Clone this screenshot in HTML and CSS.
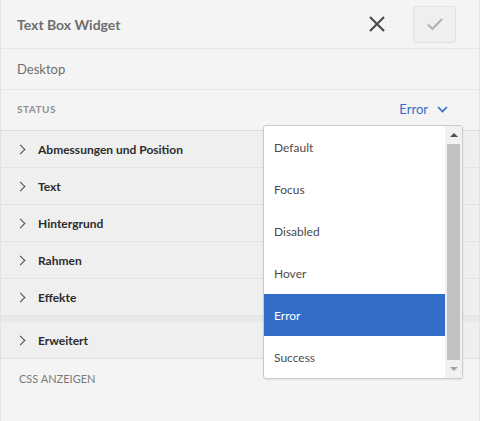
FILE: index.html
```html
<!DOCTYPE html>
<html>
<head>
<meta charset="utf-8">
<link rel="stylesheet" href="styles.css">
</head>
<body>
<div class="panel">
  <header class="header">
    <h1 class="title">Text Box Widget</h1>
    <button class="icon-btn close" aria-label="Close">
      <svg width="18" height="18" viewBox="0 0 18 18"><path d="M2 2L16 16M16 2L2 16" stroke="#4b4b4b" stroke-width="2.2" fill="none"/></svg>
    </button>
    <button class="icon-btn confirm" aria-label="Confirm">
      <svg width="18" height="14" viewBox="0 0 18 14"><path d="M2 7.5L6.5 12L16 2" stroke="#b3b3b3" stroke-width="2.2" fill="none"/></svg>
    </button>
  </header>
  <div class="row device">Desktop</div>
  <div class="row status">
    <span class="label">STATUS</span>
    <span class="select">Error
      <svg width="11" height="7" viewBox="0 0 11 7"><path d="M1 1L5.5 5.5L10 1" stroke="#326ec9" stroke-width="1.6" fill="none"/></svg>
    </span>
  </div>
  <div class="accordion">
    <div class="item"><span class="chev"></span>Abmessungen und Position</div>
    <div class="item"><span class="chev"></span>Text</div>
    <div class="item"><span class="chev"></span>Hintergrund</div>
    <div class="item"><span class="chev"></span>Rahmen</div>
    <div class="item"><span class="chev"></span>Effekte</div>
    <div class="band"></div>
    <div class="item"><span class="chev"></span>Erweitert</div>
  </div>
  <div class="css-link">CSS ANZEIGEN</div>

  <div class="dropdown">
    <ul class="options">
      <li>Default</li>
      <li>Focus</li>
      <li>Disabled</li>
      <li>Hover</li>
      <li class="selected">Error</li>
      <li>Success</li>
    </ul>
    <div class="scrollbar">
      <span class="arrow up"></span>
      <span class="thumb"></span>
      <span class="arrow down"></span>
    </div>
  </div>
</div>
</body>
</html>
```
FILE: styles.css
```css
* { box-sizing: border-box; }
html, body { margin: 0; padding: 0; }
body {
  width: 480px;
  height: 421px;
  background: #f4f4f4;
  font-family: Lato, "Open Sans", sans-serif;
  color: #4b4b4b;
}
.panel {
  position: relative;
  height: 421px;
  border-left: 1px solid #e2e2e2;
  border-right: 1px solid #e2e2e2;
  background: #f4f4f4;
}
.header {
  display: flex;
  align-items: center;
  height: 49px;
  padding: 0 23px 0 16px;
  border-bottom: 1px solid #e6e6e6;
}
.title {
  flex: 1;
  margin: 0;
  font-size: 14px;
  font-weight: 700;
  color: #6e6e6e;
}
.icon-btn {
  display: flex;
  align-items: center;
  justify-content: center;
  border: 0;
  padding: 0;
  background: none;
}
.close { width: 20px; height: 20px; margin-right: 26px; }
.confirm {
  width: 43px;
  height: 37px;
  border: 1px solid #e1e1e1;
  border-radius: 3px;
  background: #efefef;
}
.row {
  display: flex;
  align-items: center;
  padding: 0 16px;
  border-bottom: 1px solid #e6e6e6;
}
.device {
  height: 41px;
  font-size: 13px;
  color: #6e6e6e;
}
.status {
  height: 41px;
  justify-content: space-between;
  padding-right: 31px;
  padding-bottom: 2px;
  border-bottom: 1px solid #dcdcdc;
}
.label {
  font-size: 10px;
  font-weight: 700;
  letter-spacing: 0.5px;
  color: #909090;
}
.select {
  display: flex;
  align-items: center;
  gap: 9px;
  font-size: 13px;
  color: #326ec9;
}
.accordion { background: #efefef; }
.item {
  display: flex;
  align-items: center;
  height: 37px;
  padding-left: 17px;
  font-size: 12px;
  font-weight: 700;
  color: #2c2c2c;
  border-bottom: 1px solid #e3e3e3;
}
.chev {
  width: 7px;
  height: 7px;
  border-right: 1.5px solid #4b4b4b;
  border-top: 1.5px solid #4b4b4b;
  transform: rotate(45deg);
  margin-right: 14px;
  margin-left: -1px;
}
.band { height: 6px; background: #e8e8e8; }
.css-link {
  padding: 13px 18px;
  font-size: 11px;
  color: #7a7a7a;
}
.dropdown {
  position: absolute;
  left: 262px;
  top: 125px;
  width: 200px;
  height: 254px;
  display: flex;
  background: #fff;
  border: 1px solid #cacaca;
  border-radius: 3px;
  box-shadow: 0 1px 2px rgba(0,0,0,0.08);
  overflow: hidden;
}
.options {
  flex: 1;
  list-style: none;
  margin: 0;
  padding: 0;
}
.options li {
  display: flex;
  align-items: center;
  height: 42px;
  padding-left: 10px;
  font-size: 12px;
  color: #4b4b4b;
}
.options li.selected { background: #326ec9; color: #fff; }
.scrollbar {
  width: 17px;
  display: flex;
  flex-direction: column;
  align-items: center;
  background: #f1f1f1;
  padding: 0 2px;
}
.arrow {
  width: 0; height: 0;
  border-left: 4px solid transparent;
  border-right: 4px solid transparent;
  margin: 7px 0;
}
.arrow.up { border-bottom: 4px solid #505050; }
.arrow.down { border-top: 4px solid #a3a3a3; }
.thumb { flex: 1; width: 13px; background: #c1c1c1; }
```
